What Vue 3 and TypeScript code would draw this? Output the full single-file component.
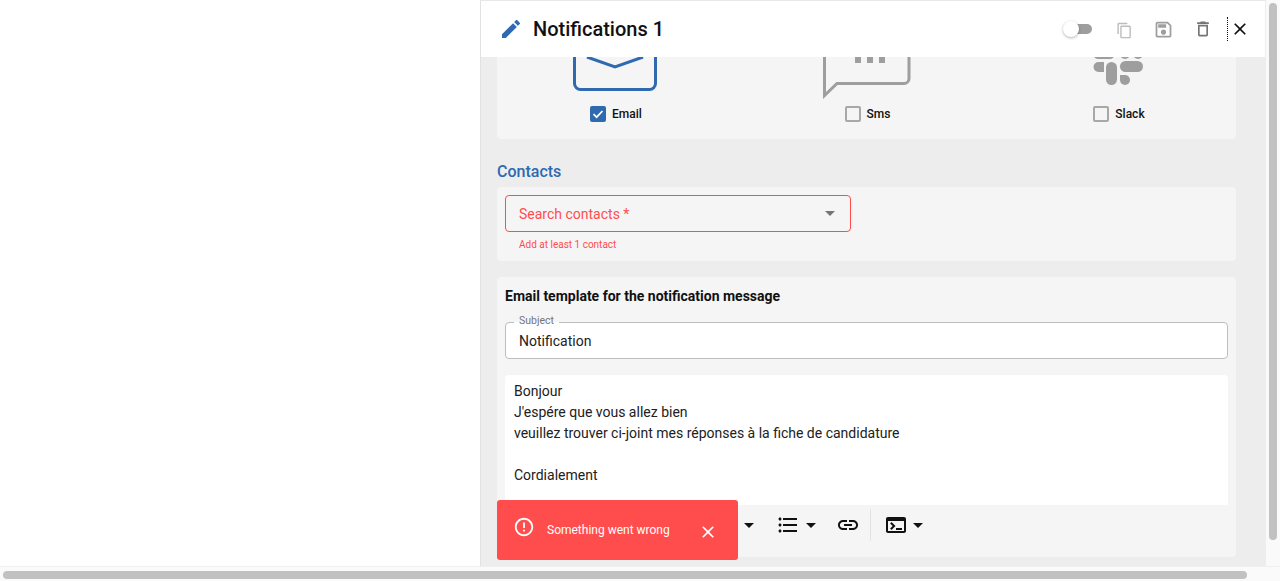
<script setup lang="ts">
const lines = [
  'Bonjour',
  "J'espére que vous allez bien",
  'veuillez trouver ci-joint mes réponses à la fiche de candidature',
  '',
  'Cordialement',
]
</script>

<template>
  <div class="page">
    <div class="page-main">
      <div class="left-space"></div>

      <div class="drawer">
        <header class="drawer-head">
          <svg class="pencil" viewBox="0 0 24 24"><path d="M3 17.25V21h3.75L17.81 9.94l-3.75-3.75L3 17.25zM20.71 7.04c.39-.39.39-1.02 0-1.41l-2.34-2.34c-.39-.39-1.02-.39-1.41 0l-1.83 1.83 3.75 3.75 1.83-1.83z" /></svg>
          <h1 class="title">Notifications 1</h1>

          <div class="toggle"><span class="toggle-knob"></span></div>
          <svg class="head-icon copy" viewBox="0 0 24 24"><path d="M16 1H4c-1.1 0-2 .9-2 2v14h2V3h12V1zm3 4H8c-1.1 0-2 .9-2 2v14c0 1.1.9 2 2 2h11c1.1 0 2-.9 2-2V7c0-1.1-.9-2-2-2zm0 16H8V7h11v14z" /></svg>
          <svg class="head-icon save" viewBox="0 0 24 24"><path d="M17 3H5c-1.11 0-2 .9-2 2v14c0 1.1.89 2 2 2h14c1.1 0 2-.9 2-2V7l-4-4zm2 16H5V5h11.17L19 7.83V19zm-7-7c-1.66 0-3 1.34-3 3s1.34 3 3 3 3-1.34 3-3-1.34-3-3-3zM6 6h9v4H6z" /></svg>
          <svg class="head-icon trash" viewBox="0 0 24 24"><path d="M6 19c0 1.1.9 2 2 2h8c1.1 0 2-.9 2-2V7H6v12zM8 9h8v10H8V9zm7.5-5l-1-1h-5l-1 1H5v2h14V4z" /></svg>
          <span class="dotted"></span>
          <svg class="head-icon close" viewBox="0 0 24 24"><path d="M19 6.41L17.59 5 12 10.59 6.41 5 5 6.41 10.59 12 5 17.59 6.41 19 12 13.41 17.59 19 19 17.59 13.41 12z" /></svg>
        </header>

        <div class="drawer-body">
          <section class="card channels">
            <div class="channel">
              <svg class="channel-icon" viewBox="0 0 100 42">
                <rect x="9.5" y="-20" width="81" height="52.5" rx="6" fill="none" stroke="#2f69b0" stroke-width="3" />
                <path d="M22 0L50 10L78 0" fill="none" stroke="#2f69b0" stroke-width="3" />
              </svg>
              <label class="check-row">
                <span class="box on">
                  <svg viewBox="0 0 16 16"><path d="M3.5 8.2L6.6 11.2L12.5 5" fill="none" stroke="#fff" stroke-width="1.7" /></svg>
                </span>
                Email
              </label>
            </div>

            <div class="channel">
              <svg class="channel-icon" viewBox="0 0 100 42">
                <path d="M7.5 -10V38.5L20 26.5H87a5 5 0 0 0 5 -5V-10" fill="none" stroke="#9e9e9e" stroke-width="3" />
                <rect x="38" y="0" width="6" height="6" fill="#9e9e9e" />
                <rect x="50" y="0" width="6" height="6" fill="#9e9e9e" />
                <rect x="62" y="0" width="6" height="6" fill="#9e9e9e" />
              </svg>
              <label class="check-row"><span class="box"></span>Sms</label>
            </div>

            <div class="channel">
              <svg class="channel-icon" viewBox="0 0 100 42" fill="#9e9e9e">
                <rect x="25" y="-9" width="22" height="11" rx="5.5" />
                <rect x="52" y="-15" width="10" height="17" rx="5" />
                <rect x="65" y="-9" width="10" height="11" rx="5" />
                <path d="M30.5 5H36V15H30.5a5 5 0 0 1 0 -10z" />
                <rect x="38" y="5" width="11" height="23" rx="5.5" />
                <rect x="52" y="4" width="23" height="11" rx="5.5" />
                <path d="M52 18H57a5 5 0 0 1 0 10a5 5 0 0 1 -5 -5z" />
              </svg>
              <label class="check-row"><span class="box"></span>Slack</label>
            </div>
          </section>

          <h2 class="section-title">Contacts</h2>
          <section class="card contacts">
            <div class="select">
              <span>Search contacts *</span>
              <i class="caret grey"></i>
            </div>
            <div class="helper">Add at least 1 contact</div>
          </section>

          <section class="card template">
            <h3 class="template-title">Email template for the notification message</h3>
            <div class="subject">
              <span class="subject-label">Subject</span>
              Notification
            </div>
            <div class="editor">
              <div v-for="(line, i) in lines" :key="i" class="editor-line">{{ line }}</div>
            </div>
            <div class="toolbar">
              <i class="caret first"></i>
              <svg class="tool list" viewBox="0 0 24 24"><path d="M4 10.5c-.83 0-1.5.67-1.5 1.5s.67 1.5 1.5 1.5 1.5-.67 1.5-1.5-.67-1.5-1.5-1.5zm0-6c-.83 0-1.5.67-1.5 1.5S3.17 7.5 4 7.5 5.5 6.83 5.5 6 4.83 4.5 4 4.5zm0 12c-.83 0-1.5.68-1.5 1.5s.68 1.5 1.5 1.5 1.5-.68 1.5-1.5-.67-1.5-1.5-1.5zM7 19h14v-2H7v2zm0-6h14v-2H7v2zm0-8v2h14V5H7z" /></svg>
              <i class="caret after-list"></i>
              <svg class="tool link" viewBox="0 0 24 24"><path d="M3.9 12c0-1.71 1.39-3.1 3.1-3.1h4V7H7c-2.76 0-5 2.24-5 5s2.24 5 5 5h4v-1.9H7c-1.71 0-3.1-1.39-3.1-3.1zM8 13h8v-2H8v2zm9-6h-4v1.9h4c1.71 0 3.1 1.39 3.1 3.1s-1.39 3.1-3.1 3.1h-4V17h4c2.76 0 5-2.24 5-5s-2.24-5-5-5z" /></svg>
              <span class="tool-sep"></span>
              <svg class="tool term" viewBox="0 0 24 24"><path d="M20 4H4c-1.11 0-2 .9-2 2v12c0 1.1.89 2 2 2h16c1.1 0 2-.9 2-2V6c0-1.1-.9-2-2-2zm0 14H4V8h16v10zm-2-1h-6v-2h6v2zM7.5 17l-1.41-1.41L8.67 13l-2.59-2.59L7.5 9l4 4-4 4z" /></svg>
              <i class="caret after-term"></i>
            </div>
          </section>
        </div>

        <div class="toast">
          <svg class="toast-alert" viewBox="0 0 24 24"><path d="M11 15h2v2h-2zm0-8h2v6h-2zm.99-5C6.47 2 2 6.48 2 12s4.47 10 9.99 10C17.52 22 22 17.52 22 12S17.52 2 11.99 2zM12 20c-4.42 0-8-3.58-8-8s3.58-8 8-8 8 3.58 8 8-3.58 8-8 8z" /></svg>
          <span class="toast-text">Something went wrong</span>
          <svg class="toast-close" viewBox="0 0 24 24"><path d="M19 6.41L17.59 5 12 10.59 6.41 5 5 6.41 10.59 12 5 17.59 6.41 19 12 13.41 17.59 19 19 17.59 13.41 12z" /></svg>
        </div>
      </div>

      <div class="vtrack"><div class="vthumb"></div></div>
    </div>

    <div class="htrack"><div class="hthumb"></div></div>
  </div>
</template>

<style>
html,
body {
  margin: 0;
  overflow: hidden;
  background: #fff;
}
</style>

<style scoped>
.page {
  width: 1280px;
  height: 581px;
  display: flex;
  flex-direction: column;
  overflow: hidden;
  font-family: Roboto, "Liberation Sans", sans-serif;
  color: #111;
}

.page-main {
  display: flex;
  height: 566px;
}

.left-space {
  width: 480px;
  background: #fff;
}

.drawer {
  position: relative;
  width: 786px;
  box-sizing: border-box;
  display: flex;
  flex-direction: column;
  background: #ededed;
  border-left: 1px solid #e2e2e2;
  border-top: 1px solid #e8e8e8;
  overflow: hidden;
}

.drawer-head {
  flex: none;
  height: 56px;
  margin-right: 1px;
  display: flex;
  align-items: center;
  padding: 0 15px 0 18px;
  background: #fff;
  box-sizing: border-box;
}

.pencil {
  width: 24px;
  height: 24px;
  fill: #2f69b0;
}

.title {
  margin: 0 0 0 10px;
  flex: 1;
  font-size: 20px;
  font-weight: 500;
  color: #111;
}

.toggle {
  position: relative;
  width: 19px;
  height: 10px;
  margin-right: 24px;
  border-radius: 0 5px 5px 0;
  background: #9e9e9e;
}

.toggle-knob {
  position: absolute;
  left: -10px;
  top: -3px;
  width: 16px;
  height: 16px;
  border-radius: 50%;
  background: #fff;
  box-shadow: 0 1px 3px rgba(0, 0, 0, 0.3);
}

.head-icon {
  flex: none;
  width: 20px;
  height: 20px;
}

.copy {
  width: 17px;
  height: 17px;
  margin: 2px 20px 0 0;
  fill: #bdbdbd;
}

.save {
  width: 21px;
  height: 21px;
  margin-right: 19px;
  fill: #9e9e9e;
}

.trash {
  margin-right: 14px;
  fill: #757575;
}

.dotted {
  height: 24px;
  margin-right: 2px;
  border-left: 1px dotted #111;
}

.close {
  fill: #111;
}

.drawer-body {
  flex: 1;
  padding: 0 30px 0 16px;
}

.card {
  background: #f5f5f5;
  border-radius: 4px;
}

.channels {
  height: 82px;
  display: flex;
  justify-content: space-between;
  overflow: hidden;
  border-radius: 0 0 4px 4px;
}

.channel {
  width: 236px;
  display: flex;
  flex-direction: column;
  align-items: center;
}

.channel-icon {
  flex: none;
  width: 100px;
  height: 42px;
}

.check-row {
  display: flex;
  align-items: center;
  gap: 6px;
  margin: 7px 0 0 2px;
  font-size: 12px;
  font-weight: 500;
  line-height: 16px;
  color: #111;
}

.box {
  width: 16px;
  height: 16px;
  box-sizing: border-box;
  border: 2px solid #a8a8a8;
  border-radius: 2px;
}

.box.on {
  border: 0;
  background: #2f69b0;
}

.box.on svg {
  display: block;
}

.section-title {
  margin: 20px 0 3px;
  padding-top: 1px;
  font-size: 16px;
  line-height: 24px;
  font-weight: 500;
  color: #2f69b0;
}

.contacts {
  height: 74px;
  box-sizing: border-box;
  padding: 8px;
}

.select {
  width: 346px;
  height: 37px;
  box-sizing: border-box;
  padding: 0 15px 0 13px;
  display: flex;
  align-items: center;
  justify-content: space-between;
  border: 1px solid #ff4d4d;
  border-radius: 4px;
  color: #ff4d4d;
  font-size: 14px;
}

.caret {
  display: block;
  flex: none;
  width: 0;
  height: 0;
  border-left: 5px solid transparent;
  border-right: 5px solid transparent;
  border-top: 5px solid #111;
}

.caret.grey {
  border-left-width: 5.5px;
  border-right-width: 5.5px;
  border-top-color: #757575;
}

.helper {
  margin: 6px 0 0 14px;
  font-size: 10px;
  line-height: 13px;
  color: #ff4d4d;
}

.template {
  margin-top: 16px;
  height: 280px;
  box-sizing: border-box;
  padding: 8px 8px 0;
}

.template-title {
  margin: 0;
  font-size: 14px;
  line-height: 22px;
  font-weight: 700;
}

.subject {
  position: relative;
  height: 37px;
  margin-top: 15px;
  box-sizing: border-box;
  padding-left: 13px;
  line-height: 36px;
  font-size: 14px;
  border: 1px solid #bdbdbd;
  border-radius: 4px;
  background: #fff;
  color: #212121;
}

.subject-label {
  position: absolute;
  left: 8px;
  top: -8px;
  padding: 0 5px;
  font-size: 10.5px;
  line-height: 12px;
  color: #757575;
  background: linear-gradient(#f5f5f5 58%, #fff 58%);
}

.editor {
  height: 130px;
  margin-top: 16px;
  box-sizing: border-box;
  padding: 6px 9px;
  background: #fff;
  border-radius: 4px 4px 0 0;
  font-size: 14px;
  line-height: 21px;
  color: #212121;
}

.editor-line {
  min-height: 21px;
}

.toolbar {
  height: 40px;
  display: flex;
  align-items: center;
  padding-left: 239px;
}

.tool {
  flex: none;
  width: 24px;
  height: 24px;
  fill: #111;
}

.caret.first {
  margin-right: 22px;
}

.caret.after-list {
  margin-left: 6px;
  margin-right: 20px;
}

.tool-sep {
  width: 1px;
  height: 32px;
  margin: 0 13px 0 10px;
  background: #e2e2e2;
}

.caret.after-term {
  margin-left: 5px;
}

.toast {
  position: absolute;
  left: 16px;
  top: 499px;
  width: 241px;
  height: 60px;
  display: flex;
  align-items: flex-start;
  box-sizing: border-box;
  border-radius: 3px;
  background: #ff4d4d;
  color: #fff;
}

.toast-alert {
  width: 22px;
  height: 22px;
  margin: 16px 0 0 16px;
  fill: #fff;
}

.toast-text {
  margin: 23px 0 0 12px;
  font-size: 12px;
  line-height: 14px;
}

.toast-close {
  width: 20px;
  height: 20px;
  margin: 22px 0 0 28px;
  fill: #fff;
}

.vtrack {
  width: 14px;
  background: #fafafa;
  padding-top: 3px;
  box-sizing: border-box;
}

.vthumb {
  width: 8px;
  height: 537px;
  margin-left: 3px;
  border-radius: 4px;
  background: #c1c1c1;
}

.htrack {
  height: 15px;
  box-sizing: border-box;
  padding: 4px 0 0 3px;
  background: #fafafa;
  border-top: 1px solid #f0f0f0;
}

.hthumb {
  width: 1244px;
  height: 8px;
  border-radius: 4px;
  background: #c1c1c1;
}
</style>
